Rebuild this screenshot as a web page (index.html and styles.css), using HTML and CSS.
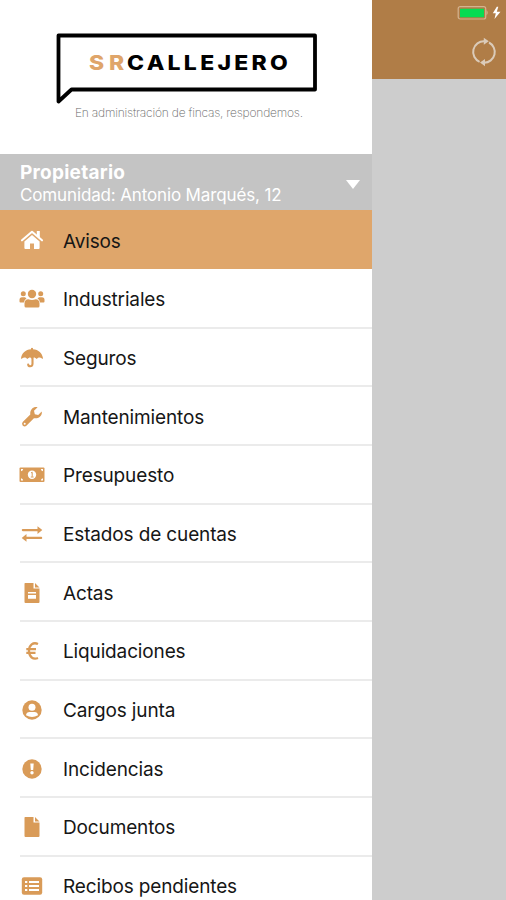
FILE: index.html
```html
<!DOCTYPE html>
<html lang="es">
<head>
<meta charset="utf-8">
<title>SR Callejero</title>
<link rel="stylesheet" href="styles.css">
</head>
<body>
<div class="app">
  <aside class="drawer">
    <header class="brand">
      <svg class="logo" viewBox="0 0 372 154" role="img">
        <path class="bubble" d="M58.5 35.5H315V89.5H71.5L58.5 101.5Z"/>
        <g transform="scale(1.12 1)">
          <text class="name accent" x="79.4" y="70.5" textLength="31.5">SR</text>
          <text class="name" x="113.4" y="70.5" textLength="143.5">CALLEJERO</text>
        </g>
        <text class="tagline" x="75" y="117" textLength="228">En administración de fincas, respondemos.</text>
      </svg>
    </header>
    <section class="account">
      <div class="account-text">
        <strong class="role">Propietario</strong>
        <span class="community">Comunidad: Antonio Marqués, 12</span>
      </div>
      <svg class="caret" viewBox="0 0 14 9"><path d="M0 0H14L7 9Z"/></svg>
    </section>
    <nav class="menu">
      <a class="item active"><svg class="icon" viewBox="0 0 26 24"><path d="M13 7L5.4 13.4V20q0 1 1 1H11V15.4H15V21H19.6q1 0 1-1V13.4Z"/><path class="line" d="M3 12.3L13 3.8L23 12.3"/><path d="M17.8 3H20.8V10L17.8 7.5Z"/></svg><span class="label">Avisos</span></a>
      <a class="item"><svg class="icon" viewBox="0 0 26 24"><circle cx="13" cy="7" r="4.2"/><circle cx="4.3" cy="6.7" r="2.5"/><circle cx="21.7" cy="6.7" r="2.5"/><path d="M5.5 19V16.3Q5.5 12.5 9.3 12.2Q13 13.6 16.7 12.2Q20.5 12.5 20.5 16.3V19Q20.5 20.5 19 20.5H7Q5.5 20.5 5.5 19ZM.5 14.5V12.8Q.5 10.3 3 10.3H6L7.5 11.4Q5.4 12.5 4.9 15.4H1.4Q.5 15.4 .5 14.5ZM25.5 14.5V12.8Q25.5 10.3 23 10.3H20L18.5 11.4Q20.6 12.5 21.1 15.4H24.6Q25.5 15.4 25.5 14.5Z"/></svg><span class="label">Industriales</span></a>
      <a class="item"><svg class="icon" viewBox="0 0 26 24"><path d="M12 3.2V2.2q1-1 2 0V3.2C19.5 3.6 23.3 7 24 12.2Q24 13.3 23 12.6C21 10.8 19.2 11 17.5 13.1C15.8 11.3 14.5 11 13 13C11.5 11 10.2 11.3 8.5 13.1C6.8 11 5 10.8 3 12.6Q2 13.3 2 12.2C2.7 7 6.5 3.6 12 3.2Z"/><path class="line" d="M13.5 11V18Q13.3 20.3 11.2 20.3Q9.4 20.3 9.2 18.6"/></svg><span class="label">Seguros</span></a>
      <a class="item"><svg class="icon" viewBox="0 0 26 24"><path fill-rule="evenodd" d="M22.7 6.5L19.2 10L15.8 9.2L15 5.8L18.6 2.3C15 1.3 10.8 4 11.3 9.6L3.7 17.1Q2.3 19 3.8 20.7Q5.7 22.1 7.4 20.8L14.9 13.2C20.5 14.1 23.7 9.8 22.7 6.5ZM5.7 17.7a1 1 0 1 1 0 2a1 1 0 1 1 0-2Z"/></svg><span class="label">Mantenimientos</span></a>
      <a class="item"><svg class="icon" viewBox="0 0 26 24"><rect x=".5" y="4.5" width="25" height="14.5" rx="1"/><circle class="cut" cx="13" cy="11.7" r="4.2"/><path class="detail" d="M12 10L13.2 9.2V13.7M11.8 14H14.6"/><path class="cut" d="M2 6H4.2Q4 7.8 2 8.2ZM24 6H21.8Q22 7.8 24 8.2ZM2 17.5V15.3Q4 15.5 4.2 17.5ZM24 17.5V15.3Q22 15.5 21.8 17.5Z"/></svg><span class="label">Presupuesto</span></a>
      <a class="item"><svg class="icon" viewBox="0 0 26 24"><path class="line" d="M3.8 8.1H20M22.2 15.9H6"/><path d="M18.5 4.2L23.3 8.1L18.5 12ZM7.5 12L2.7 15.9L7.5 19.8Z"/></svg><span class="label">Estados de cuentas</span></a>
      <a class="item"><svg class="icon" viewBox="0 0 26 24"><path d="M6 2H14.5V7.5H20.5V21Q20.5 22 19.5 22H6.5Q5.5 22 5.5 21V3Q5.5 2 6 2ZM16 2L20.5 6.4H16Z"/><path class="cut" d="M9 11H17V12.6H9ZM9 13.9H17V17.8H9Z"/></svg><span class="label">Actas</span></a>
      <a class="item"><svg class="icon" viewBox="0 0 26 24"><path class="euro" d="M19 5C14.2 2.8 10 6 10 12S14.2 21 19 19M7.3 10.2H17M7.3 13.8H16.5"/></svg><span class="label">Liquidaciones</span></a>
      <a class="item"><svg class="icon" viewBox="0 0 26 24"><circle cx="13" cy="12" r="9.7"/><circle class="cut" cx="13" cy="9.2" r="3.5"/><path class="cut" d="M7 17.3Q7.5 14 10.5 14H15.5Q18.5 14 19 17.3Q13 20.6 7 17.3Z"/></svg><span class="label">Cargos junta</span></a>
      <a class="item"><svg class="icon" viewBox="0 0 26 24"><circle cx="13" cy="12" r="9.7"/><path class="cut" d="M11.3 6.4H14.7L14.2 13H11.8Z"/><circle class="cut" cx="13" cy="15.8" r="1.7"/></svg><span class="label">Incidencias</span></a>
      <a class="item"><svg class="icon" viewBox="0 0 26 24"><path d="M6 2H14.5V7.5H20.5V21Q20.5 22 19.5 22H6.5Q5.5 22 5.5 21V3Q5.5 2 6 2ZM16 2L20.5 6.4H16Z"/></svg><span class="label">Documentos</span></a>
      <a class="item"><svg class="icon" viewBox="0 0 26 24"><rect x="2.8" y="3.2" width="20.4" height="17.6" rx="2.2"/><path class="list" d="M6 8H8.3M10 8H20M6 12H8.3M10 12H20M6 16H8.3M10 16H20"/></svg><span class="label">Recibos pendientes</span></a>
    </nav>
  </aside>
  <main class="page">
    <header class="topbar">
      <svg class="status" viewBox="0 0 45 16"><rect class="battery" x="1.2" y="1.7" width="27.5" height="12.3" rx="2"/><rect class="charge" x="3" y="3.7" width="24" height="8.5" rx=".5"/><path class="tip" d="M29.5 5Q32 7.7 29.5 10.5Z"/><path class="bolt" d="M39.8 1.8L35.8 8.3H38.8L37.5 14L43.5 6.8H39.8L41.3 1.8Z"/></svg>
      <svg class="refresh" viewBox="0 0 26 30"><path class="arc" d="M8.6 24.8A10.7 10.7 0 0 1 13.5 4.3M18 5.5A10.7 10.7 0 0 1 13.2 25.7"/><path d="M12.8 .8L17.8 4.3L12.8 7.8ZM14 22L9 25.5L14 29.2Z"/></svg>
    </header>
  </main>
</div>
</body>
</html>
```
FILE: styles.css
```css
* { box-sizing: border-box; }
body { margin: 0; font-family: Inter, "Liberation Sans", sans-serif; }
.app { display: flex; width: 506px; height: 900px; overflow: hidden; background: #cdcdcd; }
.drawer { flex: 0 0 372px; height: 900px; overflow: hidden; background: #fff; }
.brand { height: 154px; }
.logo { display: block; width: 372px; height: 154px; }
.bubble { fill: none; stroke: #000; stroke-width: 3.8; stroke-linejoin: round; }
.name { font-size: 20.5px; font-weight: 800; fill: #000; }
.accent { fill: #dfa56a; }
.tagline { font-size: 12px; font-weight: 200; fill: #666; }
.account { display: flex; align-items: center; justify-content: space-between; height: 56px; padding: 0 12px 0 20px; background: #c4c4c4; color: #fff; }
.account-text { display: flex; flex-direction: column; padding-top: 2px; }
.role { font-size: 19px; line-height: 23px; font-weight: 700; letter-spacing: .25px; }
.community { font-size: 17px; line-height: 22px; letter-spacing: -.14px; }
.caret { width: 14px; height: 9px; margin-top: 4px; fill: #fff; }
.menu { display: flex; flex-direction: column; }
.item { flex: none; display: flex; align-items: center; height: 58.67px; padding-left: 19px; color: #161616; background: linear-gradient(#ebebeb, #ebebeb) 20px 100% / 100% 2px no-repeat; }
.active { height: 59.4px; padding-top: 1px; margin-bottom: .7px; background: #dfa66b; }
.icon { flex: none; width: 26px; height: 24px; fill: #d99b58; }
.active .icon { fill: #fff; }
.line { fill: none; stroke: #d99b58; stroke-width: 2.1; stroke-linecap: round; stroke-linejoin: round; }
.active .line { stroke: #fff; }
.cut { fill: #fff; }
.detail { fill: none; stroke: #d99b58; stroke-width: 1; }
.list { fill: none; stroke: #fff; stroke-width: 1.8; }
.euro { fill: none; stroke: #d99b58; stroke-width: 2.3; }
.label { margin: 2px 0 0 18px; font-size: 19px; line-height: 24px; letter-spacing: -.14px; white-space: nowrap; }
.active .label { margin-top: 3px; }
.page { flex: 1; background: #cdcdcd; }
.topbar { display: flex; flex-direction: column; align-items: flex-end; height: 79px; background: #b07d47; }
.status { width: 45px; height: 16px; margin: 5px 4px 0 0; }
.battery { fill: none; stroke: #d4b38f; stroke-width: 1.2; }
.charge { fill: #07dc52; }
.tip { fill: #d4b38f; }
.bolt { fill: #fff; }
.refresh { width: 26px; height: 30px; margin: 16px 9px 0 0; fill: #dbcbb9; }
.arc { fill: none; stroke: #dbcbb9; stroke-width: 2; }
```
